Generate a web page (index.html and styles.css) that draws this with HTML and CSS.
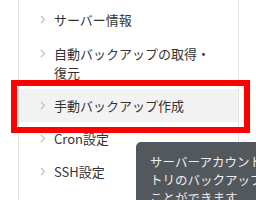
FILE: index.html
```html
<!DOCTYPE html>
<html lang="ja">
<head>
<meta charset="utf-8">
<link rel="stylesheet" href="styles.css">
</head>
<body>
<div class="page">
  <ul class="menu">
    <li class="item"><svg class="chev" viewBox="0 0 6 9" width="6" height="9"><polyline points="1,1 4.5,4.5 1,8"/></svg><span class="label">サーバー情報</span></li>
    <li class="item item-two"><svg class="chev" viewBox="0 0 6 9" width="6" height="9"><polyline points="1,1 4.5,4.5 1,8"/></svg><span class="label">自動バックアップの取得・復元</span></li>
    <li class="item active"><svg class="chev" viewBox="0 0 6 9" width="6" height="9"><polyline points="1,1 4.5,4.5 1,8"/></svg><span class="label">手動バックアップ作成</span></li>
    <li class="item"><svg class="chev" viewBox="0 0 6 9" width="6" height="9"><polyline points="1,1 4.5,4.5 1,8"/></svg><span class="label">Cron設定</span></li>
    <li class="item"><svg class="chev" viewBox="0 0 6 9" width="6" height="9"><polyline points="1,1 4.5,4.5 1,8"/></svg><span class="label">SSH設定</span></li>
  </ul>
  <div class="highlight-box"></div>
  <div class="tooltip">サーバーアカウントのホームディレク<br>トリのバックアップを作成する<br>ことができます</div>
</div>
</body>
</html>
```

FILE: styles.css
```css
html, body {
  margin: 0;
  padding: 0;
  overflow: hidden;
  background: #ffffff;
}
.page {
  position: relative;
  width: 256px;
  height: 200px;
  overflow: hidden;
  font-family: "Noto Sans CJK JP", "Noto Sans", sans-serif;
}
.menu {
  list-style: none;
  margin: 0 0 0 18px;
  padding: 3px 0 0 0;
  width: 219px;
  height: 197px;
  border-left: 1px solid #e3e3e3;
  border-right: 1px solid #e3e3e3;
}
.item {
  display: flex;
  align-items: flex-start;
  padding: 7px 24px 7px 21px;
  font-size: 13px;
  line-height: 19px;
  color: #333333;
}
.item-two {
  padding-top: 8px;
}
.item.active {
  background: #f2f2f2;
}
.chev {
  flex: none;
  margin-top: 5px;
  margin-right: 8px;
}
.chev polyline {
  fill: none;
  stroke: #bdbdbd;
  stroke-width: 1.1;
}
.label {
  flex: 1;
}
.highlight-box {
  position: absolute;
  left: 11px;
  top: 80px;
  width: 239px;
  height: 53px;
  box-sizing: border-box;
  border: 6px solid #ff0000;
}
.tooltip {
  position: absolute;
  left: 136px;
  top: 142px;
  width: 230px;
  padding: 11px 14px;
  background: #53585c;
  color: #eeeeee;
  border-radius: 5px;
  font-size: 12.5px;
  line-height: 18px;
  white-space: nowrap;
}
```
